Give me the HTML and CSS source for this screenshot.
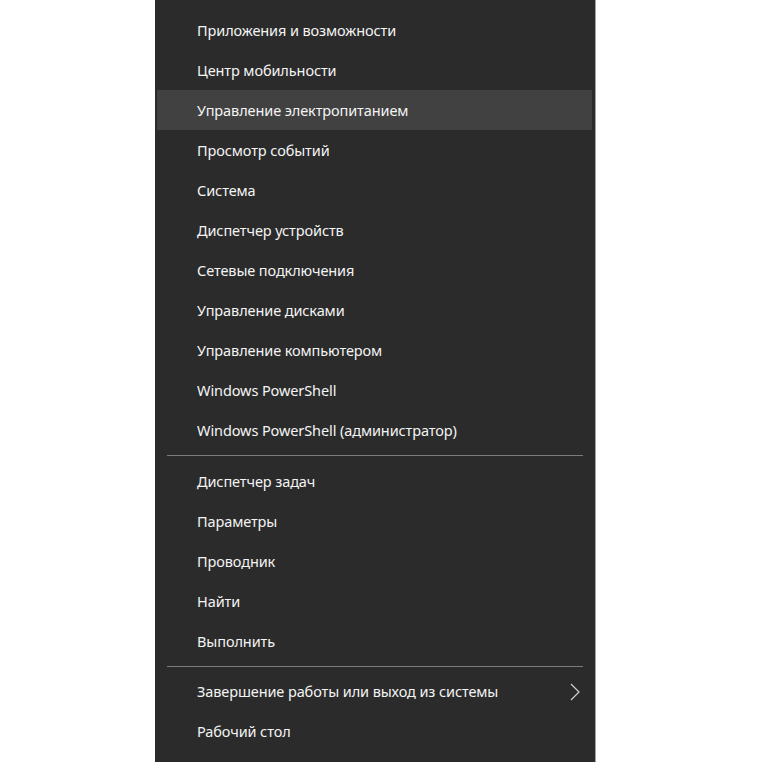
FILE: index.html
```html
<!DOCTYPE html>
<html lang="ru">
<head>
  <meta charset="UTF-8">
  <title>Меню Win+X</title>
  <link rel="stylesheet" href="styles.css">
</head>
<body>
  <div class="menu">
    <ul class="menu-group">
      <li class="menu-item">Приложения и возможности</li>
      <li class="menu-item">Центр мобильности</li>
      <li class="menu-item active">Управление электропитанием</li>
      <li class="menu-item">Просмотр событий</li>
      <li class="menu-item">Система</li>
      <li class="menu-item">Диспетчер устройств</li>
      <li class="menu-item">Сетевые подключения</li>
      <li class="menu-item">Управление дисками</li>
      <li class="menu-item">Управление компьютером</li>
      <li class="menu-item">Windows PowerShell</li>
      <li class="menu-item">Windows PowerShell (администратор)</li>
    </ul>
    <div class="separator"></div>
    <ul class="menu-group">
      <li class="menu-item">Диспетчер задач</li>
      <li class="menu-item">Параметры</li>
      <li class="menu-item">Проводник</li>
      <li class="menu-item">Найти</li>
      <li class="menu-item">Выполнить</li>
    </ul>
    <div class="separator"></div>
    <ul class="menu-group">
      <li class="menu-item has-sub">
        <span>Завершение работы или выход из системы</span>
        <svg class="chevron" width="10" height="18" viewBox="0 0 10 18">
          <path d="M1 1 L9 9 L1 17" fill="none" stroke="#cfcfcf" stroke-width="1.2"/>
        </svg>
      </li>
      <li class="menu-item">Рабочий стол</li>
    </ul>
  </div>
</body>
</html>
```

FILE: styles.css
```css
* {
  box-sizing: border-box;
  margin: 0;
  padding: 0;
}

body {
  background: #ffffff;
  width: 760px;
  height: 763px;
  overflow: hidden;
  font-family: 'Noto Sans', 'Open Sans', sans-serif;
}

.menu {
  margin-left: 155px;
  width: 441px;
  height: 762px;
  background: #2b2b2b;
  border-right: 1px solid #a0a0a0;
  padding: 10px 3px 11px 2px;
  display: flex;
  flex-direction: column;
}

.menu-group {
  list-style: none;
}

.menu-item {
  height: 40px;
  display: flex;
  align-items: center;
  justify-content: space-between;
  padding: 0 12px 0 40px;
  color: #f4f4f4;
  font-size: 14.5px;
  letter-spacing: -0.1px;
  white-space: nowrap;
}

.menu-item.active {
  background: #414141;
}

.chevron {
  margin-top: 1px;
}

.separator {
  height: 1px;
  margin: 5px 9px 5px 10px;
  background: #7c7c7c;
}
```
